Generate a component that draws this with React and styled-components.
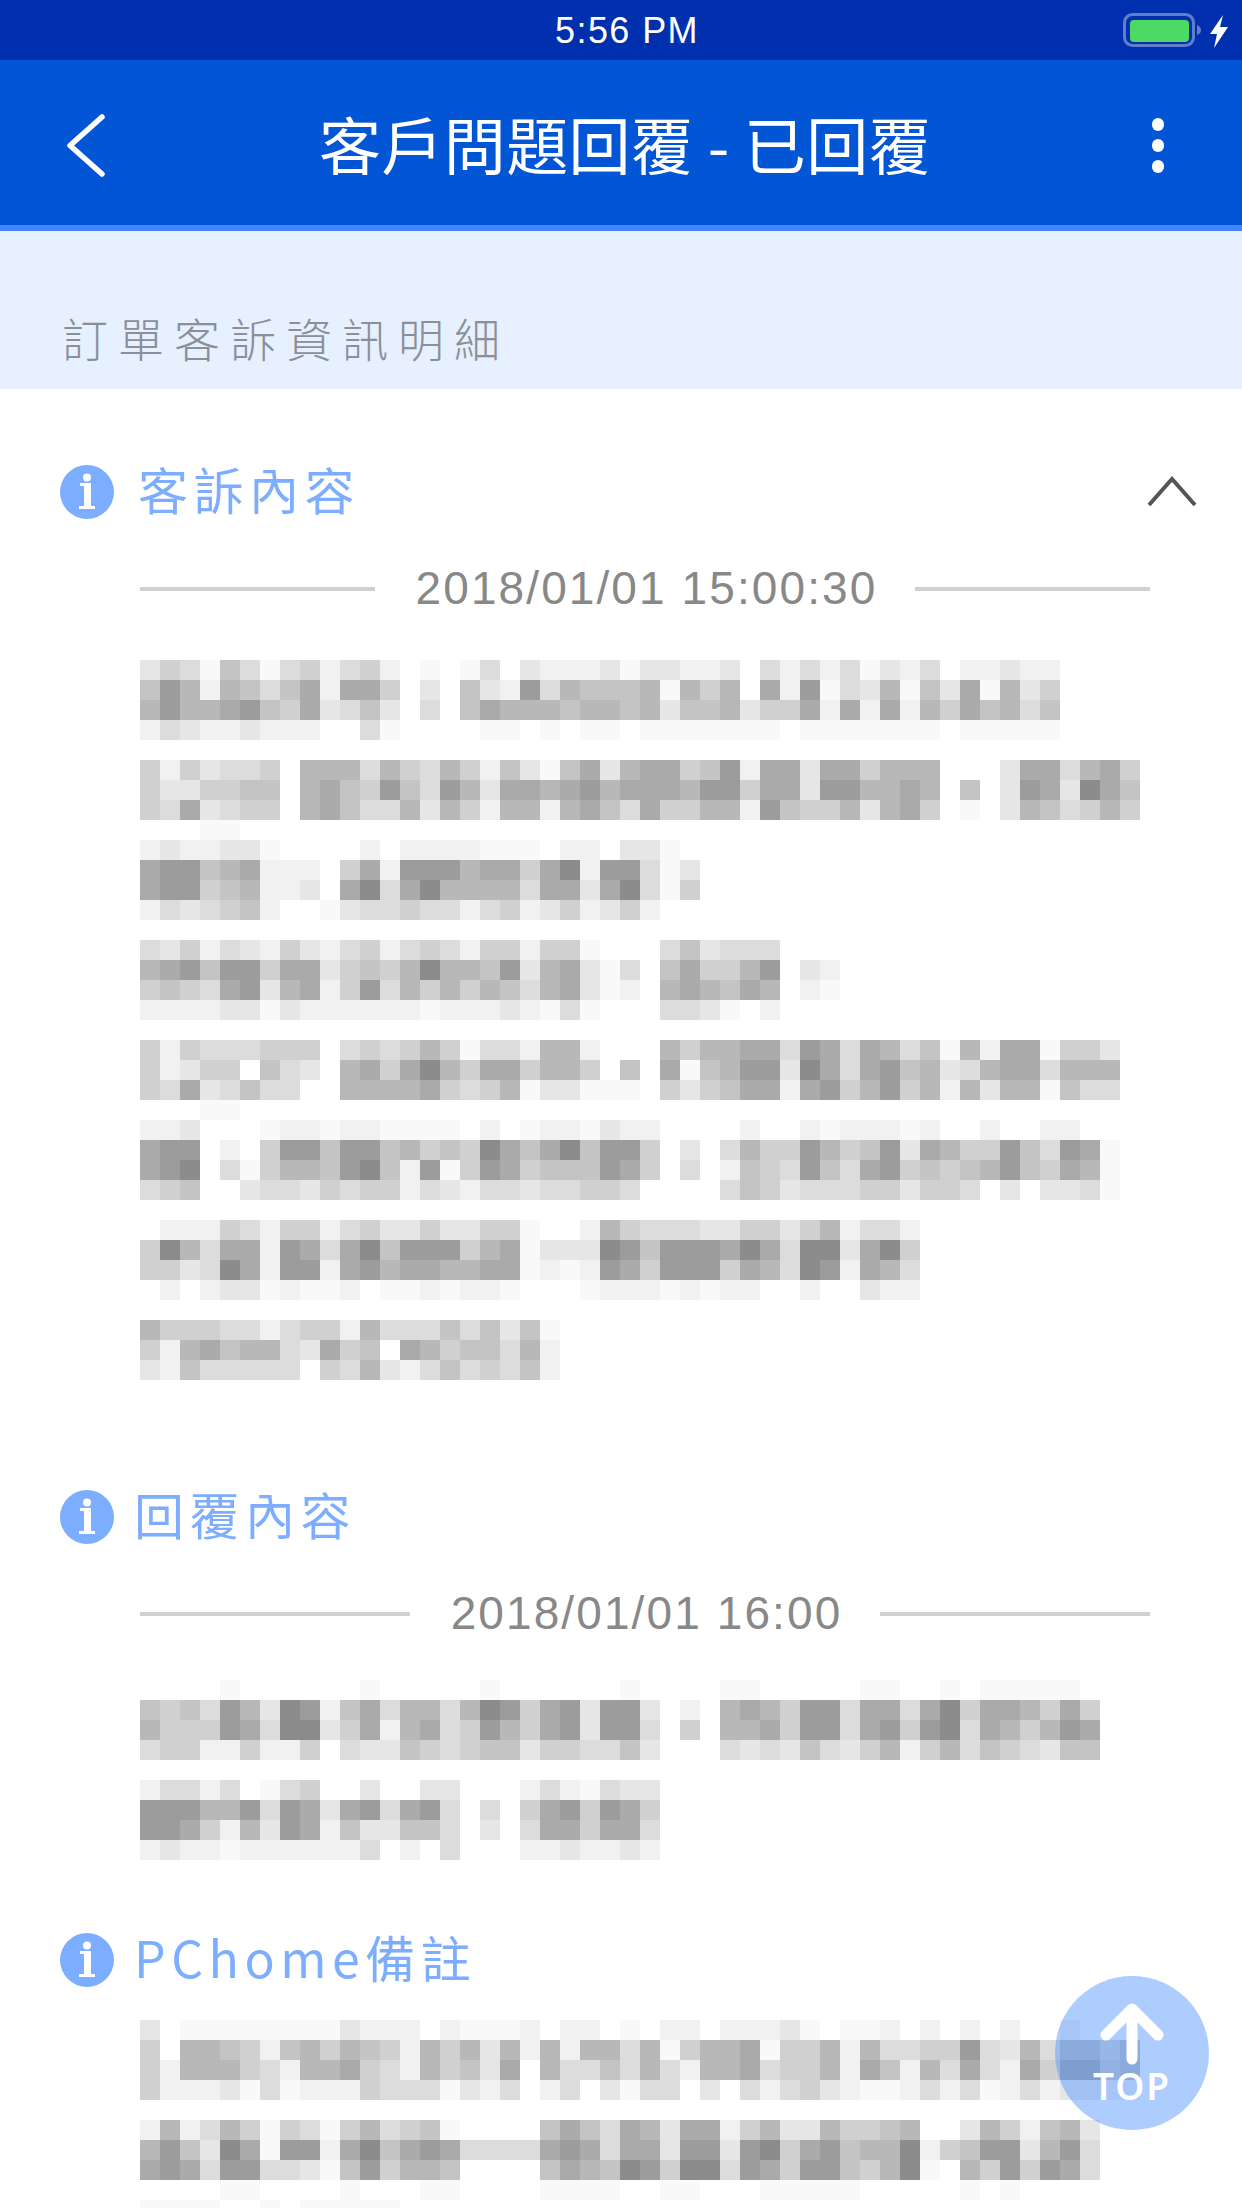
import styled, { createGlobalStyle } from "styled-components";

const CJK = `"Noto Sans CJK TC", "Liberation Sans", sans-serif`;

const GRAYS = {
    0: "#ffffff", 1: "#f9f9f9", 2: "#f1f1f1", 3: "#e6e6e6", 4: "#dcdcdc", 5: "#d0d0d0",
    6: "#c4c4c4", 7: "#b8b8b8", 8: "#aaaaaa", 9: "#9c9c9c", a: "#8c8c8c",
};

const complaintRows = [
    "3541641452 4520101403 2223133223 0424241324 022322",
    "6972764682 8850306329 4766671757 0829143716 381735",
    "7977896583 4630406877 7677673667 3558282827 586746",
    "2432232220 0410000110 1011011111 1101111111 011111",
    "",
    "5253445077 7475475263 1683788569 2883885777 0003884785",
    "5335566078 6596497388 7897888799 5883997787 0603983a86",
    "5483455078 6447375277 2786485577 2965573785 0103764575",
    "00011",
    "2322331000 0202222111 0220331",
    "8996782220 5829997885 8a299413",
    "8995672230 8a48a77774 88 38a415",
    "2434562001 3445442452 352352",
    "",
    "4352432532 4524542552 5510004634 44",
    "7896995883 5657a77693 7831406855 79032",
    "5654893782 5947575764 7831207876 87021",
    "2222331322 2222122232 1410004431 02",
    "",
    "5254445550 4545751442 7720007577 8849848746 172881553",
    "5235506430 7858a75885 7750608167 993a848967 347884777",
    "5483464400 7777854571 3311105356 8828957957 273771644",
    "00011",
    "2230001221 2211110201 2213220000 2002122212 0020022",
    "8990205996 9967565a86 8a69950304 7559756938 755964981",
    "89a0415776 9a62915985 6669850402 6549648956 567965871",
    "4560034435 4552432443 4455400004 6534445535 540303341",
    "",
    "0222542552 4533533551 0027544433 553572442",
    "5a74882984 8a69995781 333a969998 a84aa38a5",
    "5534a82992 8978877881 2129859995 874a92874",
    "0202331211 2011212210 0012221212 200200322",
    "",
    "7555442455 2744464636 1",
    "5278677438 5608756647 2",
    "3264444405 4732464546 2",
];

const replyRows = [
    "0000100000 0100000100 0000100001 1000001100 10111110",
    "6564973a92 6847747a95 8939930207 8759948848 a5887585",
    "75559 84aa3 5827845975 8939940507 7859948959 a4875798",
    "4552252250 4336545663 5544630004 3436435725 74654366",
    "",
    "2442401450 0300330002 421433",
    "9997794983 8948940405 895985",
    "9985273982 6336640304 885884",
    "2322122222 2402040002 232232",
];

const noteRows = [
    "3011111111 3222021112 0220102202 2231011202 02020020",
    "5077652675 7652757372 7277471577 8155727445 5943747757",
    "5277754277 8542756380 7446474277 8455728627 4842859967",
    "5222314122 2544413240 2403144030 4245321124 2412423322",
    "",
    "2724751541 5745610000 6864873882 5733755670 03752673",
    "7963a81992 8a68984444 8984883993 9a58967 7a2 56993794",
    "8984994431 6957760000 6876a95aa4 9859965 7a1 07595984",
    "0000110000 1000110000 1111001100 0111110000 01010000",
    "1111001011 111",
];

function Mosaic(props){
    const {rows, top} = props;

    return (
        <MosaicBox $top={top}>
            {rows.map((row, i) => (
                <PixelRow key={i}>
                    {row.replace(/\s/g, "").split("").map((g, j) => <Pixel key={j} $g={g}/>)}
                </PixelRow>
            ))}
        </MosaicBox>
    );
}

function InfoIcon(){
    return (
        <svg width="54" height="54" viewBox="0 0 54 54">
            <circle cx="27" cy="27" r="27" fill="#7dadff"/>
            <circle cx="27" cy="12.5" r="4" fill="#fff"/>
            <path d="M20 18h11v23h4v3H19v-3h5V21h-4z" fill="#fff"/>
        </svg>
    );
}

function SectionHead(props){
    const {title, nudge, children} = props;

    return (
        <Head>
            <InfoIcon/>
            <HeadTitle $nudge={nudge}>{title}</HeadTitle>
            {children}
        </Head>
    );
}

function DateRow(props){
    return (
        <DateLine>
            <Rule/>
            <DateText>{props.children}</DateText>
            <Rule/>
        </DateLine>
    );
}

export default function App(){
    return (
        <Page>
            <GlobalStyle/>
            <StatusBar>
                <span/>
                <Clock>5:56 PM</Clock>
                <Battery>
                    <svg width="108" height="36" viewBox="0 0 108 36">
                        <rect x="1.5" y="1.5" width="69" height="31" rx="8" fill="none" stroke="#fff" strokeOpacity="0.38" strokeWidth="3"/>
                        <rect x="7" y="7" width="59" height="22" rx="4" fill="#4cd964"/>
                        <path d="M74 12c3 1 4 3 4 5s-1 4-4 5z" fill="#fff" fillOpacity="0.38"/>
                        <path d="M100 2 87 21h7l-3 14 14-21h-8z" fill="#fff"/>
                    </svg>
                </Battery>
            </StatusBar>
            <NavBar>
                <BackIcon width="48" height="66" viewBox="0 0 48 66">
                    <path d="M42 5 10 33.5 42 62" fill="none" stroke="#fff" strokeWidth="5.5" strokeLinecap="round" strokeLinejoin="round"/>
                </BackIcon>
                <NavTitle>客戶問題回覆 - 已回覆</NavTitle>
                <MoreDots>
                    <Dot/>
                    <Dot/>
                    <Dot/>
                </MoreDots>
            </NavBar>
            <Band>訂單客訴資訊明細</Band>

            <Section $top={76}>
                <SectionHead title="客訴內容" nudge={24}>
                    <Collapse>
                        <svg width="50" height="32" viewBox="0 0 50 32">
                            <path d="M2 29 25 3l23 26" fill="none" stroke="#555" strokeWidth="4"/>
                        </svg>
                    </Collapse>
                </SectionHead>
                <DateRow>2018/01/01 15:00:30</DateRow>
                <Mosaic rows={complaintRows} top={44}/>
            </Section>

            <Section $top={110}>
                <SectionHead title="回覆內容" nudge={20}/>
                <DateRow>2018/01/01 16:00</DateRow>
                <Mosaic rows={replyRows} top={39}/>
            </Section>

            <Section $top={73}>
                <SectionHead title="PChome備註" nudge={20}/>
                <Mosaic rows={noteRows} top={33}/>
            </Section>

            <TopButton>
                <svg width="66" height="62" viewBox="0 0 66 62">
                    <path d="M33 56V7M7 32 33 6l26 26" fill="none" stroke="#fff" strokeWidth="11" strokeLinecap="round" strokeLinejoin="round"/>
                </svg>
                <TopLabel>TOP</TopLabel>
            </TopButton>
        </Page>
    );
}

const GlobalStyle = createGlobalStyle`
    * {
        box-sizing: border-box;
    }

    body {
        margin: 0;
        background: #fff;
    }
`;

const Page = styled.div`
    position: relative;
    width: 1242px;
    height: 2208px;
    overflow: hidden;
    background: #fff;
    font-family: ${CJK};
`;

const StatusBar = styled.div`
    display: grid;
    grid-template-columns: 1fr auto 1fr;
    align-items: center;
    height: 60px;
    padding-left: 12px;
    background-color: #0030ae;
    color: #fff;
`;

const Clock = styled.span`
    margin-top: 2px;
    font-family: "Liberation Sans", sans-serif;
    font-size: 36px;
    letter-spacing: 1.4px;
`;

const Battery = styled.div`
    display: flex;
    justify-content: flex-end;
    padding: 0 11px 0 0;

    svg {
        margin-top: 2px;
    }
`;

const NavBar = styled.div`
    display: grid;
    grid-template-columns: 1fr auto 1fr;
    align-items: center;
    height: 171px;
    padding: 0 78px 0 60px;
    background-color: #0256d6;
    border-bottom: 6px solid #4285ff;
`;

const BackIcon = styled.svg`
    margin-top: 5px;
`;

const NavTitle = styled.h1`
    margin: 0;
    padding-left: 26px;
    font-size: 62px;
    font-weight: 400;
    letter-spacing: 0.4px;
    color: #fff;
`;

const MoreDots = styled.div`
    display: flex;
    flex-direction: column;
    align-items: flex-end;
    gap: 8.5px;
    margin-top: 6px;
`;

const Dot = styled.span`
    width: 12.5px;
    height: 12.5px;
    border-radius: 50%;
    background-color: #fff;
`;

const Band = styled.div`
    height: 158px;
    padding: 76px 0 0 62px;
    background-color: #e6f0ff;
    color: #8a8f99;
    font-size: 46px;
    font-weight: 300;
    line-height: 60px;
    letter-spacing: 10px;
`;

const Section = styled.section`
    padding: ${props => props.$top}px 92px 0 60px;
`;

const Head = styled.div`
    position: relative;
    display: flex;
    align-items: center;
    height: 54px;
`;

const HeadTitle = styled.h2`
    margin: -8px 0 0 ${props => props.$nudge}px;
    color: #7dadff;
    font-size: 50px;
    font-weight: 400;
    letter-spacing: 5.5px;
`;

const Collapse = styled.div`
    display: flex;
    margin-left: auto;
    margin-right: -47px;
`;

const DateLine = styled.div`
    display: flex;
    align-items: center;
    height: 54px;
    margin: 43px 0 0 80px;
`;

const Rule = styled.div`
    flex: 1;
    height: 4px;
    background-color: #d0d0d0;
`;

const DateText = styled.div`
    margin-top: -2px;
    padding: 0 38px 0 41px;
    color: #888;
    font-family: "Liberation Sans", sans-serif;
    font-size: 46px;
    letter-spacing: 2.1px;
`;

const MosaicBox = styled.div`
    margin: ${props => props.$top}px 0 0 80px;
`;

const PixelRow = styled.div`
    display: flex;
    height: 20px;
`;

const Pixel = styled.span`
    flex: none;
    width: 20px;
    height: 20px;
    background-color: ${props => GRAYS[props.$g]};
`;

const TopButton = styled.div`
    position: absolute;
    left: 1055px;
    top: 1976px;
    display: flex;
    flex-direction: column;
    align-items: center;
    width: 154px;
    height: 154px;
    padding-top: 27px;
    border-radius: 50%;
    background-color: rgba(100, 160, 255, 0.53);
`;

const TopLabel = styled.span`
    margin-top: 2px;
    color: #fff;
    font-family: "Noto Sans", sans-serif;
    font-size: 37px;
    font-weight: 600;
    line-height: 38px;
    letter-spacing: 2px;
`;
